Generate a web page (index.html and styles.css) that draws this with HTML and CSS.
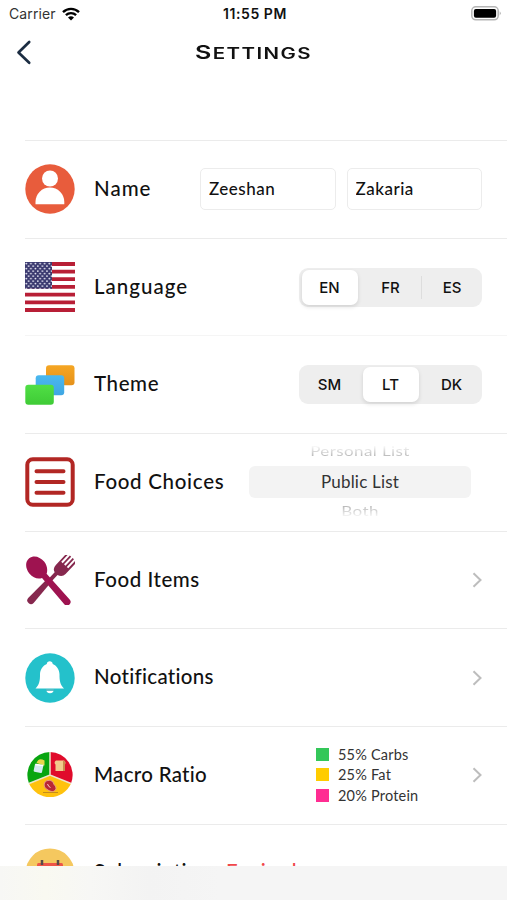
FILE: index.html
```html
<!DOCTYPE html>
<html lang="en">
<head>
  <meta charset="UTF-8">
  <meta name="viewport" content="width=device-width, initial-scale=1.0">
  <title>Settings</title>
  <link rel="stylesheet" href="styles.css">
</head>
<body>
  <div class="screen">
    <div class="status-bar">
      <div class="carrier">
        <span>Carrier</span>
        <svg width="18" height="14" viewBox="0 0 18 14" fill="none" stroke="#000" stroke-width="2.4">
          <path d="M1 5.1a11.5 11.5 0 0 1 16 0M3.9 8.2a7.4 7.4 0 0 1 10.2 0"/>
          <path d="M9 13.6L6 10.6a4.3 4.3 0 0 1 6 0z" fill="#000" stroke="none"/>
        </svg>
      </div>
      <div class="time">11:55 PM</div>
      <div class="battery">
        <svg width="31" height="15" viewBox="0 0 31 15">
          <rect x="1.8" y=".8" width="26.4" height="13" rx="4" fill="#fff" stroke="#b5b5b5" stroke-width="1.5"/>
          <rect x="3.9" y="2.9" width="22.2" height="8.8" rx="2" fill="#000"/>
          <path d="M29.7 5.2q2.2 2.1 0 4.2z" fill="#b5b5b5"/>
        </svg>
      </div>
    </div>

    <div class="nav-bar">
      <svg class="back" width="16" height="25" viewBox="0 0 16 25" fill="none" stroke="#1c2d42" stroke-width="2.7" stroke-linecap="round" stroke-linejoin="round">
        <path d="M13.2 2L2.5 12.5l10.700 10.200"/>
      </svg>
      <h1 class="title">Settings</h1>
    </div>

    <div class="list">
      <div class="row">
        <svg class="icon" viewBox="0 0 50 50">
          <circle cx="25" cy="25" r="24.7" fill="#e85c3c"/>
          <circle cx="25" cy="14.5" r="8" fill="#fff"/>
          <path d="M10.5 40.3V38a14.4 14.4 0 0 1 28.8 0v2.3z" fill="#fff"/>
        </svg>
        <div class="label name">Name</div>
        <div class="fields">
          <input type="text" value="Zeeshan">
          <input type="text" value="Zakaria">
        </div>
      </div>

      <div class="row faint">
        <svg class="icon" viewBox="0 0 50 50">
          <defs>
            <pattern id="stars" width="4.6" height="5" patternUnits="userSpaceOnUse">
              <circle cx="1.3" cy="1.6" r=".9" fill="#e9e9f5"/>
              <circle cx="3.6" cy="4.1" r=".9" fill="#e9e9f5"/>
            </pattern>
          </defs>
          <rect width="50" height="50" fill="#fff"/>
          <path d="M0 2h50M0 9.6h50M0 17.2h50M0 24.9h50M0 32.6h50M0 40.3h50M0 48h50" stroke="#b81f36" stroke-width="3.8"/>
          <rect width="27" height="26.8" fill="#3c3b70"/>
          <rect width="27" height="26.8" fill="url(#stars)"/>
        </svg>
        <div class="label language">Language</div>
        <div class="segments">
          <span class="segment active">EN</span>
          <span class="segment">FR</span>
          <span class="segment divided">ES</span>
        </div>
      </div>

      <div class="row">
        <svg class="icon" viewBox="0 0 50 50">
          <defs>
            <linearGradient id="orange" x2="0" y2="1"><stop stop-color="#f5a623"/><stop offset="1" stop-color="#e5911a"/></linearGradient>
            <linearGradient id="blue" x2="0" y2="1"><stop stop-color="#4ab8ef"/><stop offset="1" stop-color="#3fa6e3"/></linearGradient>
            <linearGradient id="green" x2="0" y2="1"><stop stop-color="#50df45"/><stop offset="1" stop-color="#3fcb36"/></linearGradient>
          </defs>
          <rect x="21" y="5.3" width="28.5" height="20" rx="3" fill="url(#orange)"/>
          <rect x="10.7" y="15.2" width="28.5" height="20" rx="3" fill="url(#blue)"/>
          <rect x=".3" y="24.8" width="28.5" height="20" rx="3" fill="url(#green)"/>
        </svg>
        <div class="label theme">Theme</div>
        <div class="segments">
          <span class="segment">SM</span>
          <span class="segment active">LT</span>
          <span class="segment">DK</span>
        </div>
      </div>

      <div class="row">
        <svg class="icon" viewBox="0 0 50 50" fill="none" stroke="#b22724" stroke-width="4" stroke-linecap="round">
          <rect x="2.3" y="2.3" width="45.4" height="45.4" rx="5.5"/>
          <path d="M11.5 14.2h27M11.5 25h27M11.5 35.8h27"/>
        </svg>
        <div class="label choices">Food Choices</div>
        <div class="picker">
          <div class="option above">Personal List</div>
          <div class="option selected">Public List</div>
          <div class="option below">Both</div>
        </div>
      </div>

      <div class="row">
        <svg class="icon" viewBox="0 0 50 50">
          <g transform="rotate(43 25 25)" fill="#86284e">
            <path d="M22.2 27h5.2l1.3 26q-.2 3.5-3.7 3.500t-3.700-3.500z"/>
            <path d="M19-6.500h1.800V4h2V-6.500h1.800V4h2V-6.500h1.800V4h2V-6.500h1.900V10q0 5-5.200 6.200v12h-3.900V16.200Q19 15 19 10z"/>
          </g>
          <g transform="rotate(-39 25 25)" fill="#9e1350">
            <path d="M22.500-5c5.800 0 9.500 5.500 9.500 12 0 5-2.500 9-5.700 11L28 52.500q0 3.800-3.600 3.800t-3.600-3.800L20 18.500c-4-1.500-7-5.500-7-11.500C13 .5 17-5 22.500-5z"/>
          </g>
        </svg>
        <div class="label items">Food Items</div>
        <svg class="chevron" viewBox="0 0 10 16"><path d="M1.500 1.300L8.500 8l-7 6.700"/></svg>
      </div>

      <div class="row">
        <svg class="icon" viewBox="0 0 50 50">
          <circle cx="25" cy="25" r="24.7" fill="#24c1cb"/>
          <path d="M21 36.200h8q-.5 4-4 4t-4-4z" fill="#fff"/>
          <path d="M10.500 35.500c4-4 4.500-8 4.500-14 0-5 3-9.200 6.800-10.600 0-3.700 5.900-3.700 5.900 0 3.800 1.400 6.800 5.600 6.800 10.600 0 6 .5 10 4.500 14z" fill="#fff"/>
          <path d="M21 37h8" stroke="#24a4b0" stroke-width="1.400"/>
        </svg>
        <div class="label notifications">Notifications</div>
        <svg class="chevron" viewBox="0 0 10 16"><path d="M1.500 1.300L8.500 8l-7 6.700"/></svg>
      </div>

      <div class="row">
        <svg class="icon" viewBox="0 0 50 50">
          <path d="M25 25V2A23 23 0 0 0 4 33.500z" fill="#08a510"/>
          <path d="M25 25V2a23 23 0 0 1 21 31.500z" fill="#e00b2b"/>
          <path d="M25 25L4 33.500a23 23 0 0 0 42 0z" fill="#ffc20e"/>
          <path d="M25 2v23M4 33.500L25 25l21 8.500" fill="none" stroke="#ece5cb" stroke-width="1.500"/>
          <rect x="9.500" y="14.500" width="8.500" height="8" rx="1" fill="#d5e9f2" transform="rotate(12 14 17)"/>
          <path d="M11.500 13q2-6 8-2.500v5z" fill="#e6d64c"/>
          <path d="M10.500 14.500l8 1" stroke="#fff" stroke-width="1.500"/>
          <path d="M31 10.500h8q2.500 2 .5 4V21h-9v-6.500q-2-2 .5-4z" fill="#f2ca8c"/>
          <path d="M38 11v10h2v-6.500q1.500-2-1-4z" fill="#c98b4d"/>
          <path d="M19.500 33c2-4 8-3 9 0 0 2 3 3 2.500 5.500-1 4.500-6 3-8 1.500-3-1.500-4.500-4-3.500-7z" fill="#b92836" stroke="#e7a08c"/>
          <path d="M22.500 34q1 3 3 3.500" stroke="#fbd0c4" stroke-width="1" fill="none"/>
          <path d="M18 42.500h15" stroke="#c58c1a" stroke-width="1"/>
        </svg>
        <div class="label macro">Macro Ratio</div>
        <div class="ratios">
          <div class="ratio"><i class="swatch carbs"></i>55% Carbs</div>
          <div class="ratio"><i class="swatch fat"></i>25% Fat</div>
          <div class="ratio"><i class="swatch protein"></i>20% Protein</div>
        </div>
        <svg class="chevron" viewBox="0 0 10 16"><path d="M1.500 1.300L8.500 8l-7 6.700"/></svg>
      </div>

      <div class="row">
        <svg class="icon" viewBox="0 0 50 50">
          <circle cx="25" cy="25" r="24.500" fill="#f5c85f"/>
          <rect x="12" y="16" width="26" height="22" rx="1.500" fill="#fff"/>
          <path d="M12 21v-4.500q0-1.500 1.500-1.500h23q1.500 0 1.500 1.500V21z" fill="#ee5547"/>
          <path d="M17 12v5M33 12v5" stroke="#594b49" stroke-width="2.500"/>
        </svg>
        <div class="label subscription">Subscription</div>
        <div class="label expired">Expired</div>
      </div>
    </div>

    <div class="bottom-bar"></div>
  </div>
</body>
</html>
```
FILE: styles.css
```css
* {
  box-sizing: border-box;
}

body {
  margin: 0;
  background-color: #fff;
  color: #111;
  font-family: Lato, "Liberation Sans", sans-serif;
}

.screen {
  position: relative;
  height: 900px;
  overflow: hidden;
}

.status-bar {
  display: grid;
  grid-template-columns: 1fr auto 1fr;
  align-items: center;
  height: 27px;
  padding: 0 6px 0 9px;
  font: 14px Inter, sans-serif;
}

.carrier {
  display: flex;
  align-items: center;
  gap: 6px;
  color: #333;
  letter-spacing: 0.1px;
}

.time {
  font-weight: 600;
  font-size: 14px;
  letter-spacing: 0.55px;
}

.battery {
  display: flex;
  justify-content: flex-end;
}

.nav-bar {
  display: grid;
  grid-template-columns: 40px 1fr 40px;
  align-items: center;
  height: 50px;
  padding: 0 16px;
}

.title {
  margin: 0;
  padding-top: 1px;
  text-align: center;
  text-transform: uppercase;
  font: 600 15.5px Inter, sans-serif;
  letter-spacing: 1.1px;
  transform: scaleX(1.32);
}

.title::first-letter {
  font-size: 19px;
}

.list {
  padding: 63px 0 0 25px;
}

.row {
  display: flex;
  align-items: center;
  height: 97.7px;
  padding-right: 25px;
  border-top: 1.5px solid #ebebeb;
}

.row.faint + .row {
  border-top-color: #f5f5f5;
}

.icon {
  flex: none;
  width: 50px;
  height: 50px;
  margin-right: 19px;
}

.label {
  padding-bottom: 3px;
  font-size: 20.5px;
  font-weight: 500;
  letter-spacing: 0.4px;
  white-space: nowrap;
}

.name {
  letter-spacing: 1px;
}

.language {
  letter-spacing: 1px;
}

.theme {
  letter-spacing: 0.6px;
}

.choices {
  letter-spacing: 0.7px;
}

.items {
  letter-spacing: 0.55px;
}

.notifications,
.macro {
  letter-spacing: 0.3px;
}

.fields {
  display: flex;
  gap: 11px;
  margin-left: auto;
}

.fields input {
  width: 135.5px;
  height: 42px;
  padding: 0 8px 1px;
  border: 1px solid #ececec;
  border-radius: 5px;
  color: #111;
  background: #fff;
  font: 500 17px Lato, sans-serif;
  letter-spacing: 0.5px;
}

.segments {
  display: grid;
  grid-template-columns: repeat(3, 1fr);
  width: 183px;
  height: 39px;
  margin-left: auto;
  padding: 2px 0;
  border-radius: 9px;
  background-color: #eee;
  font: 500 15px Inter, sans-serif;
}

.segment {
  display: flex;
  align-items: center;
  justify-content: center;
}

.segment.active {
  margin: 0 2.5px;
  border-radius: 7px;
  background-color: #fff;
  box-shadow: 0 2px 4px rgba(0, 0, 0, 0.12);
}

.segment.divided {
  margin: 6px 0;
  border-left: 1px solid #ddd;
}

.picker {
  width: 222px;
  margin-left: auto;
  margin-right: 11px;
  text-align: center;
  font-size: 17px;
}

.option {
  height: 25px;
  line-height: 20px;
}

.option.selected {
  height: 32px;
  line-height: 31px;
  border-radius: 6px;
  background-color: #f3f3f3;
  color: #333;
  letter-spacing: 0.2px;
}

.above,
.below {
  color: transparent;
  letter-spacing: 0.4px;
  -webkit-background-clip: text;
  background-clip: text;
  transform: scaleY(0.8);
}

.above {
  background-image: linear-gradient(#fff 2px, #b0b0b0 18px);
}

.below {
  line-height: 25px;
  background-image: linear-gradient(#b0b0b0 5px, #fff 22px);
}

.chevron {
  flex: none;
  width: 10px;
  height: 16px;
  margin-left: auto;
  fill: none;
  stroke: #bdbdbd;
  stroke-width: 2;
}

.ratios {
  margin-left: auto;
  width: 103px;
  padding-bottom: 1px;
}

.ratio {
  display: flex;
  align-items: center;
  height: 20.4px;
  color: #333;
  font-size: 14.5px;
  letter-spacing: 0.2px;
  white-space: nowrap;
}

.swatch {
  width: 13px;
  height: 13px;
  margin-right: 9px;
}

.carbs {
  background-color: #34c759;
}

.fat {
  background-color: #ffcc00;
}

.protein {
  background-color: #ff2d92;
}

.ratios + .chevron {
  margin-left: 53px;
}

.subscription,
.expired {
  padding-bottom: 5px;
}

.expired {
  margin-left: 15px;
  color: #f0474a;
}

.bottom-bar {
  position: absolute;
  left: 0;
  right: 0;
  bottom: 0;
  height: 34px;
  background: linear-gradient(90deg, #f7f7f5, #f9f9f1 45px, #f7f7f5 90px, #f3f3f3 150px, #f5f5f5 220px, #f5f5f5);
}
```
